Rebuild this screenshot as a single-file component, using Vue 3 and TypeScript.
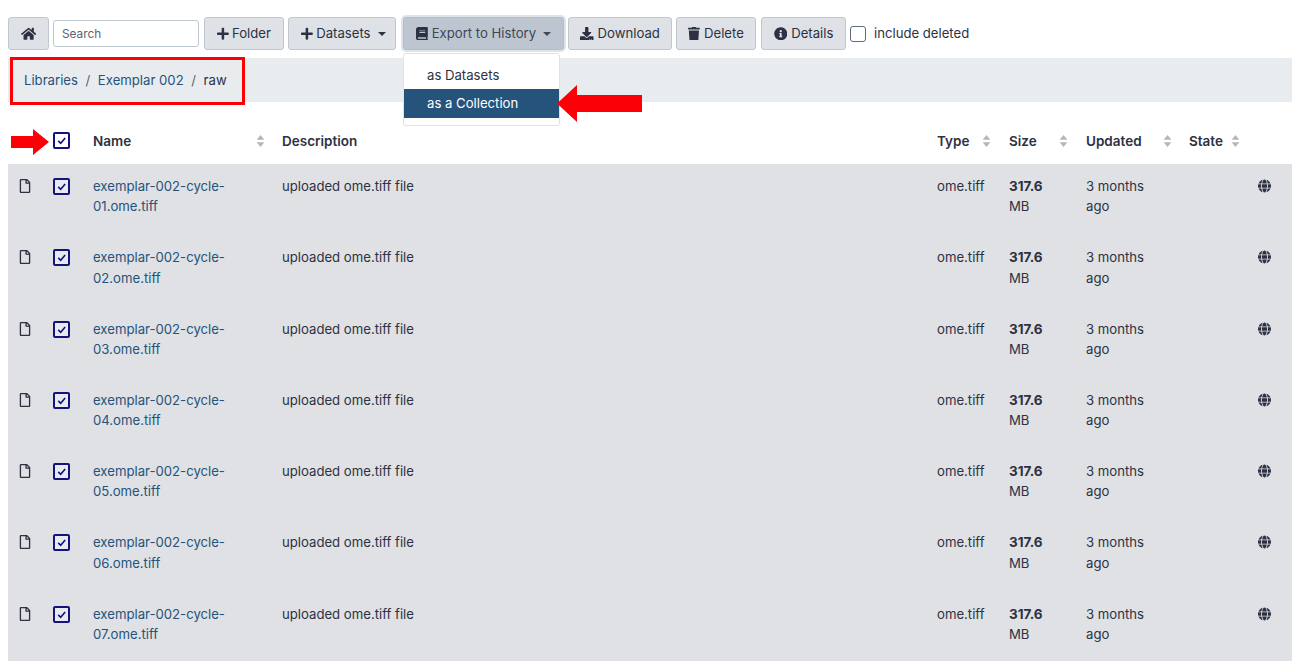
<script setup lang="ts">
const ICONS: Record<string, { box: string; d: string }> = {
  home: { box: '0 0 576 512', d: 'M280.37 148.26L96 300.11V464a16 16 0 0 0 16 16l112.06-.29a16 16 0 0 0 15.92-16V368a16 16 0 0 1 16-16h64a16 16 0 0 1 16 16v95.64a16 16 0 0 0 16 16.05L464 480a16 16 0 0 0 16-16V300L295.67 148.26a12.19 12.19 0 0 0-15.3 0zM571.6 251.47L488 182.56V44.05a12 12 0 0 0-12-12h-56a12 12 0 0 0-12 12v72.61L318.47 43a48 48 0 0 0-61 0L4.34 251.47a12 12 0 0 0-1.6 16.9l25.5 31A12 12 0 0 0 45.15 301l235.22-193.74a12.19 12.19 0 0 1 15.3 0L530.9 301a12 12 0 0 0 16.9-1.6l25.5-31a12 12 0 0 0-1.7-16.93z' },
  plus: { box: '0 0 448 512', d: 'M416 208H272V64c0-17.67-14.33-32-32-32h-32c-17.67 0-32 14.33-32 32v144H32c-17.67 0-32 14.33-32 32v32c0 17.67 14.33 32 32 32h144v144c0 17.67 14.33 32 32 32h32c17.67 0 32-14.33 32-32V304h144c17.67 0 32-14.33 32-32v-32c0-17.67-14.33-32-32-32z' },
  book: { box: '0 0 448 512', d: 'M448 360V24c0-13.3-10.7-24-24-24H96C43 0 0 43 0 96v320c0 53 43 96 96 96h328c13.3 0 24-10.7 24-24v-16c0-7.5-3.5-14.3-8.9-18.7-4.2-15.4-4.2-59.3 0-74.7 5.4-4.3 8.9-11.1 8.9-18.6zM128 134c0-3.3 2.7-6 6-6h212c3.3 0 6 2.7 6 6v20c0 3.3-2.7 6-6 6H134c-3.3 0-6-2.7-6-6v-20zm0 64c0-3.3 2.7-6 6-6h212c3.3 0 6 2.7 6 6v20c0 3.3-2.7 6-6 6H134c-3.3 0-6-2.7-6-6v-20zm253.4 250H96c-17.7 0-32-14.3-32-32 0-17.6 14.4-32 32-32h285.4c-1.9 17.1-1.9 46.9 0 64z' },
  download: { box: '0 0 512 512', d: 'M216 0h80c13.3 0 24 10.7 24 24v168h87.7c17.8 0 26.7 21.5 14.1 34.1L269.7 378.3c-7.5 7.5-19.8 7.5-27.3 0L90.1 226.1c-12.6-12.6-3.7-34.1 14.1-34.1H192V24c0-13.3 10.7-24 24-24zm296 376v112c0 13.3-10.7 24-24 24H24c-13.3 0-24-10.7-24-24V376c0-13.3 10.7-24 24-24h146.7l49 49c20.1 20.1 52.5 20.1 72.6 0l49-49H488c13.3 0 24 10.7 24 24zm-124 88c0-11-9-20-20-20s-20 9-20 20 9 20 20 20 20-9 20-20zm64 0c0-11-9-20-20-20s-20 9-20 20 9 20 20 20 20-9 20-20z' },
  trash: { box: '0 0 448 512', d: 'M432 32H312l-9.4-18.7A24 24 0 0 0 281.1 0H166.8a23.72 23.72 0 0 0-21.4 13.3L136 32H16A16 16 0 0 0 0 48v32a16 16 0 0 0 16 16h416a16 16 0 0 0 16-16V48a16 16 0 0 0-16-16zM53.2 467a48 48 0 0 0 47.9 45h245.8a48 48 0 0 0 47.9-45L416 128H32z' },
  info: { box: '0 0 512 512', d: 'M256 8C119.043 8 8 119.083 8 256c0 136.997 111.043 248 248 248s248-111.003 248-248C504 119.083 392.957 8 256 8zm0 110c23.196 0 42 18.804 42 42s-18.804 42-42 42-42-18.804-42-42 18.804-42 42-42zm56 254c0 6.627-5.373 12-12 12h-88c-6.627 0-12-5.373-12-12v-24c0-6.627 5.373-12 12-12h12v-64h-12c-6.627 0-12-5.373-12-12v-24c0-6.627 5.373-12 12-12h64c6.627 0 12 5.373 12 12v100h12c6.627 0 12 5.373 12 12v24z' },
  file: { box: '0 0 384 512', d: 'M369.9 97.9L286 14C277 5 264.8-.1 252.1-.1H48C21.5 0 0 21.5 0 48v416c0 26.5 21.5 48 48 48h288c26.5 0 48-21.5 48-48V131.9c0-12.7-5.1-25-14.1-34zM332.1 128H256V51.9l76.1 76.1zM48 464V48h160v104c0 13.3 10.7 24 24 24h104v288H48z' },
  globe: { box: '0 0 496 512', d: 'M336.5 160C322 70.7 287.8 8 248 8s-74 62.7-88.5 152h177zM152 256c0 22.2 1.2 43.5 3.3 64h185.3c2.1-20.5 3.3-41.8 3.3-64s-1.2-43.5-3.3-64H155.3c-2.1 20.5-3.3 41.8-3.3 64zm324.7-96c-28.6-67.9-86.5-120.4-158-141.6 24.4 33.8 41.2 84.7 50 141.6h108zM177.2 18.4C105.8 39.6 47.8 92.1 19.3 160h108c8.7-56.9 25.5-107.8 49.9-141.6zM487.4 192H372.7c2.1 21 3.3 42.5 3.3 64s-1.2 43-3.3 64h114.6c5.5-20.5 8.6-41.8 8.6-64s-3.1-43.5-8.5-64zM120 256c0-21.5 1.2-43 3.3-64H8.6C3.2 212.5 0 233.8 0 256s3.2 43.5 8.6 64h114.6c-2-21-3.2-42.5-3.2-64zm39.5 96c14.5 89.3 48.7 152 88.5 152s74-62.7 88.5-152h-177zm159.3 141.6c71.4-21.2 129.4-73.7 158-141.6h-108c-8.8 56.9-25.6 107.8-50 141.6zM19.3 352c28.6 67.9 86.5 120.4 158 141.6-24.4-33.8-41.2-84.7-50-141.6h-108z' },
}

const rows = ['01', '02', '03', '04', '05', '06', '07']
const columns = [
  { label: 'Name', cls: 'c-name', sortable: true },
  { label: 'Description', cls: 'c-desc', sortable: false },
  { label: 'Type', cls: 'c-type', sortable: true },
  { label: 'Size', cls: 'c-size', sortable: true },
  { label: 'Updated', cls: 'c-upd', sortable: true },
  { label: 'State', cls: 'c-state', sortable: true },
]
</script>

<template>
  <div class="page">
    <div class="toolbar">
      <button class="btn home">
        <svg class="ico" :viewBox="ICONS.home.box"><path :d="ICONS.home.d" /></svg>
      </button>
      <input class="search" placeholder="Search" />
      <button class="btn b-folder">
        <svg class="ico" :viewBox="ICONS.plus.box"><path :d="ICONS.plus.d" /></svg>Folder
      </button>
      <button class="btn b-datasets">
        <svg class="ico" :viewBox="ICONS.plus.box"><path :d="ICONS.plus.d" /></svg>Datasets<span class="caret"></span>
      </button>
      <div class="export-wrap">
        <button class="btn b-export">
          <svg class="ico" :viewBox="ICONS.book.box"><path :d="ICONS.book.d" /></svg>Export to History<span class="caret"></span>
        </button>
        <div class="menu">
          <div class="menu-item">as Datasets</div>
          <div class="menu-item active">as a Collection</div>
        </div>
      </div>
      <button class="btn b-download">
        <svg class="ico" :viewBox="ICONS.download.box"><path :d="ICONS.download.d" /></svg>Download
      </button>
      <button class="btn b-delete">
        <svg class="ico" :viewBox="ICONS.trash.box"><path :d="ICONS.trash.d" /></svg>Delete
      </button>
      <button class="btn b-details">
        <svg class="ico" :viewBox="ICONS.info.box"><path :d="ICONS.info.d" /></svg>Details
      </button>
      <label class="deleted"><span class="plain-box"></span>include deleted</label>
    </div>

    <nav class="crumbs">
      <a class="link">Libraries</a><span class="sep">/</span><a class="link">Exemplar 002</a><span class="sep">/</span><span>raw</span>
    </nav>
    <div class="red-box"></div>

    <div class="table">
      <div class="row head">
        <div class="c-icon"></div>
        <div class="c-check">
          <span class="check"><svg viewBox="0 0 16 16"><path d="M4 8.5l3 3 5.5-6.5" /></svg></span>
        </div>
        <div v-for="c in columns" :key="c.label" :class="['th', c.cls]">
          <span>{{ c.label }}</span>
          <svg v-if="c.sortable" class="sort" viewBox="0 0 10 14"><path d="M5 0l4.5 5.6h-9zM5 14l4.5-5.6h-9z" /></svg>
        </div>
      </div>
      <div v-for="n in rows" :key="n" class="row item">
        <div class="c-icon">
          <svg class="file" :viewBox="ICONS.file.box"><path :d="ICONS.file.d" /></svg>
        </div>
        <div class="c-check">
          <span class="check"><svg viewBox="0 0 16 16"><path d="M4 8.5l3 3 5.5-6.5" /></svg></span>
        </div>
        <div class="c-name"><a class="link">exemplar-002-cycle-{{ n }}.ome.tiff</a></div>
        <div class="c-desc">uploaded ome.tiff file</div>
        <div class="c-type">ome.tiff</div>
        <div class="c-size"><b>317.6</b> MB</div>
        <div class="c-upd">3 months ago</div>
        <div class="c-state">
          <svg class="globe" :viewBox="ICONS.globe.box"><path :d="ICONS.globe.d" /></svg>
        </div>
      </div>
    </div>

    <svg class="arrow arrow-left" viewBox="0 0 85 37"><path d="M0 18.5L20 0v10h65v17H20v10z" /></svg>
    <svg class="arrow arrow-right" viewBox="0 0 38 26"><path d="M0 7h22V0l16 13-16 13v-7H0z" /></svg>
  </div>
</template>

<style scoped>
.page {
  position: relative;
  width: 1296px;
  height: 665px;
  padding: 17px 4px 0 8px;
  box-sizing: border-box;
  overflow: hidden;
  background: #fff;
  color: #2c3143;
  font-family: Inter, "Liberation Sans", sans-serif;
  font-size: 13.15px;
  line-height: 20.25px;
}
.toolbar {
  display: flex;
  align-items: center;
  gap: 4px;
  height: 33px;
}
.btn {
  display: inline-flex;
  align-items: center;
  justify-content: center;
  height: 33px;
  padding: 0;
  border: 1px solid #bfc8d1;
  border-radius: 3px;
  background: #dee2e6;
  color: #2c3143;
  font: inherit;
  white-space: nowrap;
}
.ico {
  height: 13.5px;
  margin-right: 4px;
  fill: #2c3143;
}
.home { width: 41px; }
.home .ico { margin: 0; }
.b-folder .ico, .b-datasets .ico { margin-right: 3px; }
.search {
  width: 146px;
  height: 27px;
  box-sizing: border-box;
  padding: 0 8px;
  margin-right: 1px;
  border: 1px solid #bfc8d1;
  border-radius: 3px;
  background: #fff;
  font: inherit;
  font-size: 11.8px;
  color: #2c3143;
}
.search::placeholder { color: #5c6270; opacity: 1; }
.b-folder { width: 80px; }
.b-datasets { width: 108px; margin-right: 3px; padding-left: 3px; }
.export-wrap { position: relative; }
.b-export {
  width: 161px;
  background: #bdc6d0;
  color: #3f4757;
  box-shadow: 0 0 0 2px #dfe4e9;
  border-color: #b2bdc8;
}
.b-download { width: 104px; }
.b-delete { width: 80px; }
.b-details { width: 85px; margin-left: 1px; }
.caret {
  width: 0;
  height: 0;
  margin-left: 7px;
  border-top: 4px solid currentColor;
  border-left: 4px solid transparent;
  border-right: 4px solid transparent;
}
.deleted {
  display: flex;
  align-items: center;
}
.plain-box {
  width: 14px;
  height: 14px;
  margin-right: 8px;
  border: 1px solid #5f6b7a;
  border-radius: 3px;
  background: #fff;
}
.menu {
  position: absolute;
  z-index: 2;
  left: 0;
  top: 36px;
  width: 157px;
  height: 73px;
  box-sizing: border-box;
  padding-top: 7px;
  background: #fff;
  border: 1px solid #dee2e6;
  border-radius: 3px;
}
.menu-item {
  height: 28px;
  padding: 0 23px;
  line-height: 28px;
}
.menu-item.active {
  height: 29px;
  line-height: 29px;
  background: #25537b;
  color: #fff;
}
.crumbs {
  display: flex;
  align-items: center;
  height: 44px;
  margin-top: 8px;
  padding-left: 16px;
  background: #e9ecef;
}
.sep { margin: 0 7.6px; color: #5c6270; }
.link { color: #25537b; }
.red-box {
  position: absolute;
  left: 10px;
  top: 57px;
  width: 235px;
  height: 48px;
  box-sizing: border-box;
  border: 3px solid #fb0007;
}
.table { margin-top: 18px; }
.row { display: flex; }
.row > div {
  box-sizing: border-box;
  padding: 12px;
}
.head { height: 44px; }
.head > div {
  padding-top: 11px;
  padding-bottom: 0;
  font-size: 13.5px;
  font-weight: 600;
  color: #2c3143;
}
.item {
  height: 71.25px;
  background: #dfe1e4;
}
.item:last-child { height: 69px; }
.item b { font-size: 13.5px; }
.c-icon { width: 33px; padding: 12px 0 0 11px !important; }
.c-check { width: 40px; padding: 12px 0 0 12px !important; }
.item .c-icon { padding-top: 15px !important; }
.item .c-check { padding-top: 14px !important; }
.c-name { width: 189px; }
.c-desc { width: 655px; }
.c-type { width: 72px; }
.c-size { width: 77px; }
.c-upd { width: 103px; }
.c-state { width: 115px; }
.th { display: flex; align-items: flex-start; justify-content: space-between; }
.th.c-desc { justify-content: flex-start; }
.th.c-state { justify-content: flex-start; gap: 8px; }
.sort {
  width: 9px;
  height: 12px;
  margin-top: 4px;
  fill: #b4b6bc;
}
.th.c-name { padding-right: 5px; }
.th.c-type { padding-right: 6px; }
.th.c-size { padding-right: 6px; }
.th.c-upd { padding-right: 5px; }
.check {
  display: block;
  width: 17px;
  height: 17px;
  box-sizing: border-box;
  border: 2px solid #14147a;
  border-radius: 2px;
  background: #fff;
}
.item .check { background: #e8eaf2; }
.check svg {
  display: block;
  width: 13px;
  height: 13px;
  fill: none;
  stroke: #14147a;
  stroke-width: 2;
}
.file {
  display: block;
  width: 12px;
  height: 14px;
  fill: #2c3143;
}
.globe {
  display: block;
  width: 13px;
  height: 14px;
  margin: 4px 0 0 69px;
  fill: #2c3143;
}
.c-state { padding-top: 11px !important; }
.arrow {
  position: absolute;
  z-index: 3;
  fill: #fb0007;
}
.arrow-left { left: 557px; top: 85px; width: 85px; height: 37px; }
.arrow-right { left: 11px; top: 129px; width: 38px; height: 26px; }
</style>
